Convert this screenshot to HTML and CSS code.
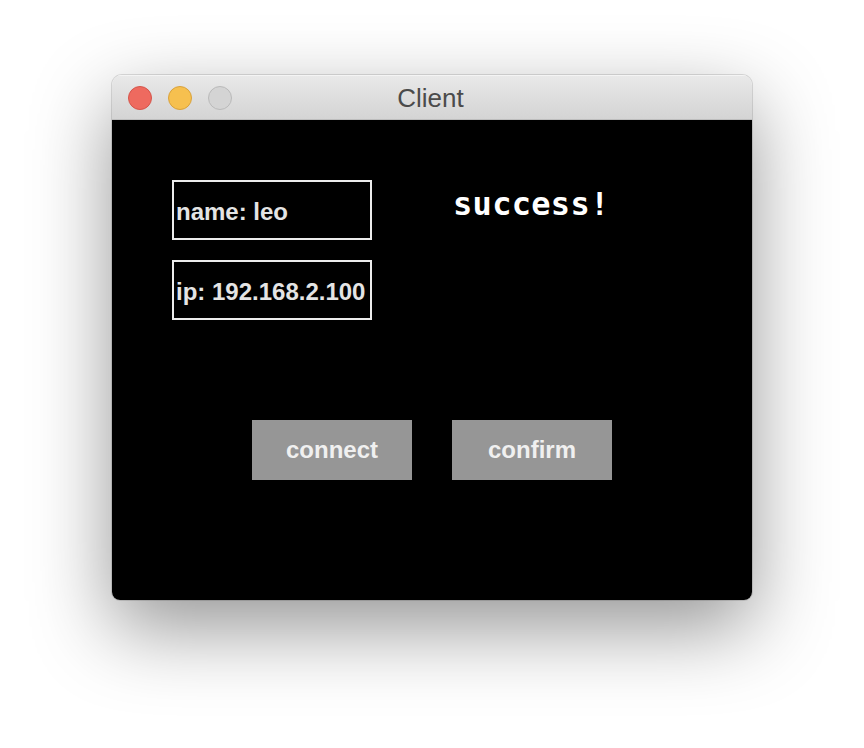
FILE: index.html
```html
<!DOCTYPE html>
<html>
<head>
<meta charset="utf-8">
<link rel="stylesheet" href="styles.css">
</head>
<body>
<div class="window">
  <div class="titlebar">
    <div class="lights">
      <span class="light red"></span>
      <span class="light yellow"></span>
      <span class="light gray"></span>
    </div>
    <div class="title">Client</div>
    <div class="spacer"></div>
  </div>
  <div class="canvas">
    <div class="top-row">
      <div class="fields">
        <div class="field">name: leo</div>
        <div class="field">ip: 192.168.2.100</div>
      </div>
      <div class="status">success!</div>
    </div>
    <div class="buttons">
      <div class="btn">connect</div>
      <div class="btn">confirm</div>
    </div>
  </div>
</div>
</body>
</html>
```
FILE: styles.css
```css
html, body {
  margin: 0;
  padding: 0;
  background: #ffffff;
}
body {
  width: 864px;
  height: 748px;
  overflow: hidden;
  display: flex;
  justify-content: center;
  align-items: flex-start;
  padding-top: 75px;
  box-sizing: border-box;
}
.window {
  width: 640px;
  border-radius: 10px 10px 8px 8px;
  overflow: hidden;
  box-shadow: 0 0 0 1px rgba(0,0,0,0.12), 0 28px 80px rgba(0,0,0,0.42);
}
.titlebar {
  height: 44px;
  display: grid;
  grid-template-columns: 1fr auto 1fr;
  align-items: center;
  background: linear-gradient(#e9e9e9, #d4d4d4);
  border-bottom: 1px solid #bdbdbd;
  box-shadow: inset 0 1px 0 #f4f4f4;
}
.lights {
  display: flex;
  gap: 16px;
  padding-left: 16px;
  padding-top: 2px;
}
.light {
  width: 22px;
  height: 22px;
  border-radius: 50%;
  border: 1px solid;
  display: block;
}
.red { background: #ee6a5f; border-color: #d5554b; }
.yellow { background: #f6c04f; border-color: #d9a23c; }
.gray { background: #d4d4d4; border-color: #bababa; }
.title {
  font-family: "Liberation Sans", Arial, sans-serif;
  font-size: 26px;
  color: #4b4b4b;
  padding-top: 2px;
  margin-right: 3px;
}
.canvas {
  height: 480px;
  background: #000;
  padding: 60px 0 0 60px;
  box-sizing: border-box;
}
.top-row {
  display: flex;
  align-items: flex-start;
}
.fields {
  display: flex;
  flex-direction: column;
  gap: 20px;
  width: 200px;
}
.field {
  height: 60px;
  box-sizing: border-box;
  border: 2px solid #ececec;
  padding: 18px 0 0 2px;
  font-family: "Liberation Sans", Arial, sans-serif;
  font-weight: bold;
  font-size: 24px;
  line-height: 24px;
  color: #e4e4e4;
  white-space: nowrap;
}
.status {
  margin-left: 81px;
  margin-top: 8px;
  font-family: "DejaVu Sans Mono", monospace;
  font-weight: bold;
  font-size: 32px;
  line-height: 32px;
  letter-spacing: 0.3px;
  color: #ffffff;
}
.buttons {
  display: flex;
  gap: 40px;
  margin: 100px 0 0 80px;
}
.btn {
  width: 160px;
  height: 60px;
  box-sizing: border-box;
  background: #969696;
  text-align: center;
  padding-top: 18px;
  font-family: "Liberation Sans", Arial, sans-serif;
  font-weight: bold;
  font-size: 24px;
  line-height: 24px;
  color: #f0f0f0;
}
```
